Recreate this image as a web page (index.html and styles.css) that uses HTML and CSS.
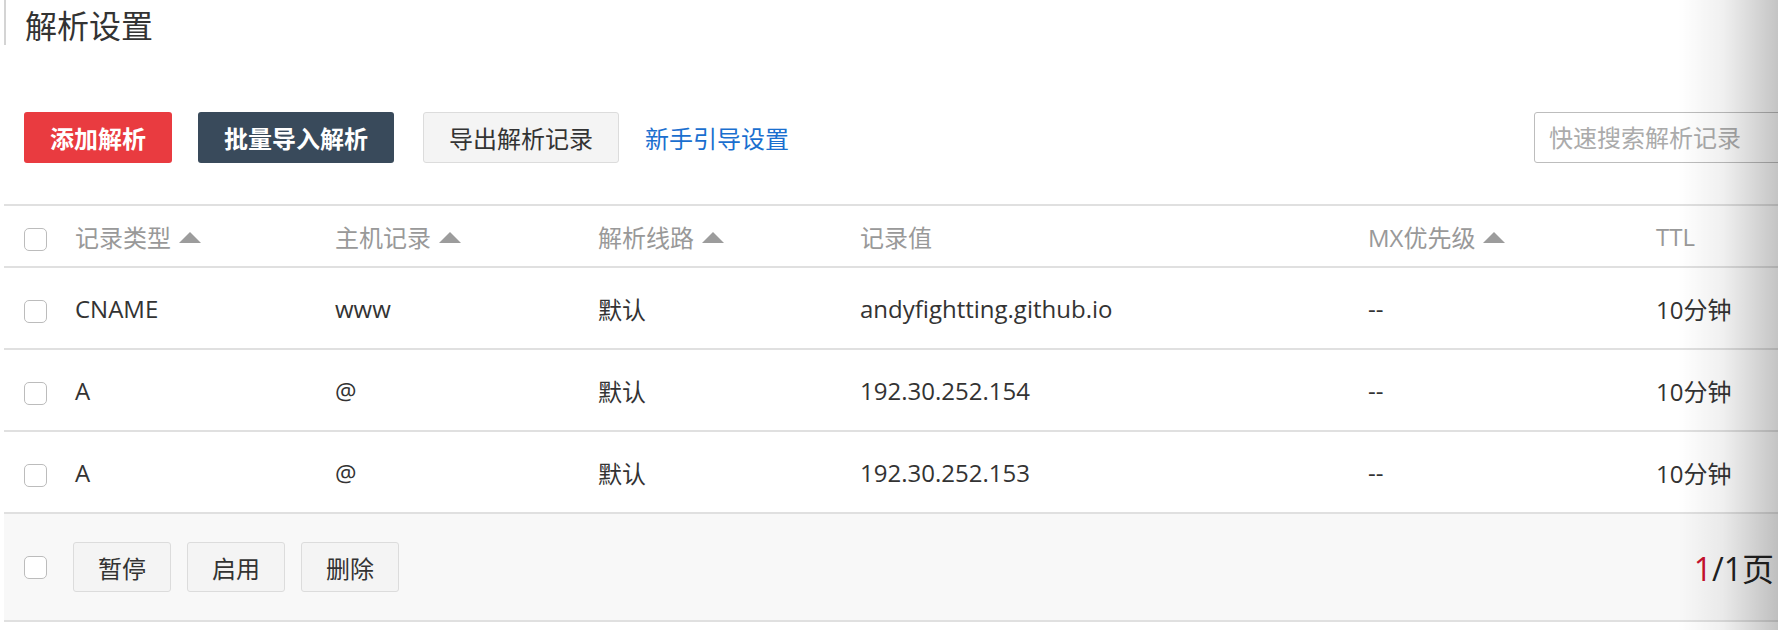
FILE: index.html
```html
<!DOCTYPE html>
<html lang="zh-CN">
<head>
<meta charset="utf-8">
<title>解析设置</title>
<link rel="stylesheet" href="styles.css">
</head>
<body>
<div class="page">
  <h1 class="title">解析设置</h1>
  <div class="toolbar">
    <button class="btn btn-red">添加解析</button>
    <button class="btn btn-dark">批量导入解析</button>
    <button class="btn btn-light">导出解析记录</button>
    <a class="guide" href="#">新手引导设置</a>
    <input class="search" type="text" placeholder="快速搜索解析记录">
  </div>
  <table class="records">
    <colgroup>
      <col class="c0"><col class="c1"><col class="c2"><col class="c3"><col class="c4"><col class="c5"><col class="c6">
    </colgroup>
    <thead>
      <tr>
        <th class="chk"><span class="box"></span></th>
        <th>记录类型<span class="tri"></span></th>
        <th>主机记录<span class="tri"></span></th>
        <th>解析线路<span class="tri"></span></th>
        <th>记录值</th>
        <th>MX优先级<span class="tri"></span></th>
        <th>TTL</th>
      </tr>
    </thead>
    <tbody>
      <tr>
        <td class="chk"><span class="box"></span></td>
        <td>CNAME</td><td>www</td><td>默认</td><td>andyfightting.github.io</td><td>--</td><td>10分钟</td>
      </tr>
      <tr>
        <td class="chk"><span class="box"></span></td>
        <td>A</td><td>@</td><td>默认</td><td>192.30.252.154</td><td>--</td><td>10分钟</td>
      </tr>
      <tr>
        <td class="chk"><span class="box"></span></td>
        <td>A</td><td>@</td><td>默认</td><td>192.30.252.153</td><td>--</td><td>10分钟</td>
      </tr>
    </tbody>
  </table>
  <div class="footer">
    <span class="box"></span>
    <button class="btn btn-small">暂停</button>
    <button class="btn btn-small">启用</button>
    <button class="btn btn-small">删除</button>
    <div class="pager"><span class="cur">1</span>/1页</div>
  </div>
</div>
<div class="edge-shadow"></div>
</body>
</html>
```
FILE: styles.css
```css
html, body {
  margin: 0;
  padding: 0;
  overflow: hidden;
  background: #fff;
}
body {
  font-family: "Open Sans", "Noto Sans CJK SC", sans-serif;
  font-size: 24px;
  color: #333;
  position: relative;
  height: 630px;
}
.page {
  margin-left: 4px;
  width: 1790px;
}
.title {
  margin: 0;
  height: 45px;
  box-sizing: border-box;
  padding: 8px 0 0 19px;
  line-height: 36px;
  font-size: 32px;
  font-weight: normal;
  color: #333;
  border-left: 2px solid #d4d4d4;
}
.toolbar {
  display: flex;
  align-items: center;
  margin-top: 67px;
  padding-left: 20px;
  height: 51px;
}
.btn {
  font-family: inherit;
  font-size: 24px;
  height: 51px;
  box-sizing: border-box;
  border-radius: 3px;
  padding: 0 26px;
  border: 1px solid transparent;
  cursor: pointer;
}
.btn-red {
  background: #e93b40;
  color: #fff;
  font-weight: bold;
  width: 148px;
  padding: 0;
}
.btn-dark {
  background: #394a5b;
  color: #fff;
  font-weight: bold;
  margin-left: 26px;
  width: 196px;
  padding: 0;
}
.btn-light {
  background: #f4f4f4;
  color: #333;
  border-color: #dcdcdc;
  margin-left: 29px;
  width: 196px;
  padding: 0;
}
.guide {
  margin-left: 26px;
  color: #1a6fcf;
  text-decoration: none;
  font-size: 24px;
}
.search {
  margin-left: auto;
  width: 260px;
  height: 51px;
  box-sizing: border-box;
  border: 1px solid #bdbdbd;
  border-radius: 3px;
  padding: 0 14px;
  font-family: inherit;
  font-size: 24px;
  color: #333;
}
.search::placeholder {
  color: #ababab;
}
.records {
  margin-top: 41px;
  width: 100%;
  border-collapse: collapse;
  table-layout: fixed;
}
.c0 { width: 71px; }
.c1 { width: 260px; }
.c2 { width: 263px; }
.c3 { width: 262px; }
.c4 { width: 508px; }
.c5 { width: 288px; }
.records th, .records td {
  text-align: left;
  padding: 0;
  border-top: 2px solid #e0e0e0;
  border-bottom: 2px solid #e0e0e0;
  white-space: nowrap;
  vertical-align: middle;
}
.records th {
  height: 60px;
  font-weight: normal;
  color: #999;
}
.records td {
  height: 80px;
  color: #333;
}
.records .chk {
  padding-left: 20px;
}
.box {
  display: inline-block;
  width: 21px;
  height: 21px;
  border: 1px solid #bcbcbc;
  border-radius: 5px;
  background: #fff;
  vertical-align: middle;
}
.tri {
  display: inline-block;
  width: 0;
  height: 0;
  border-left: 11px solid transparent;
  border-right: 11px solid transparent;
  border-bottom: 11px solid #9c9c9c;
  margin-left: 8px;
  vertical-align: 4px;
}
.footer {
  display: flex;
  align-items: center;
  height: 106px;
  background: #f8f8f8;
  border-bottom: 2px solid #e0e0e0;
  padding-left: 20px;
  padding-right: 20px;
}
.btn-small {
  background: #f4f4f4;
  color: #333;
  border-color: #dcdcdc;
  width: 98px;
  height: 50px;
  padding: 0;
  margin-left: 16px;
}
.footer .box + .btn-small {
  margin-left: 26px;
}
.pager {
  margin-left: auto;
  font-size: 32px;
  color: #222;
}
.pager .cur {
  color: #c8102e;
}
.edge-shadow {
  position: absolute;
  top: 0;
  right: 0;
  width: 100px;
  height: 630px;
  background: linear-gradient(to right, rgba(0,0,0,0) 0%, rgba(0,0,0,0.06) 45%, rgba(0,0,0,0.23) 100%);
  pointer-events: none;
}
```
